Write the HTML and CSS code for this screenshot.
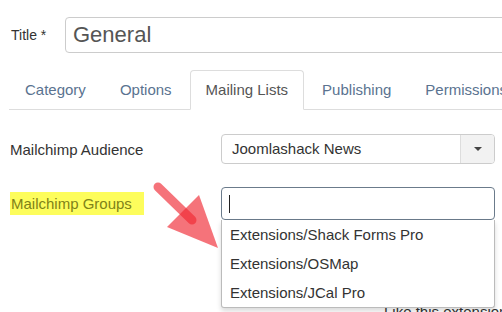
FILE: index.html
```html
<!DOCTYPE html>
<html>
<head>
  <meta charset="UTF-8">
  <meta name="viewport" content="width=device-width, initial-scale=1">
  <title>Mailing Lists</title>
  <link rel="stylesheet" href="styles.css">
</head>
<body>
  <div class="title-row">
    <label class="title-label">Title *</label>
    <div class="title-input">General</div>
  </div>

  <ul class="tabs">
    <li>Category</li>
    <li>Options</li>
    <li class="active">Mailing Lists</li>
    <li>Publishing</li>
    <li>Permissions</li>
  </ul>

  <div class="form">
    <div class="row">
      <label class="label">Mailchimp Audience</label>
      <div class="select">
        <span class="select-value">Joomlashack News</span>
        <span class="select-btn"><span class="caret"></span></span>
      </div>
    </div>

    <div class="row">
      <label class="label"><span class="highlight">Mailchimp Groups</span></label>
      <div class="control">
        <div class="search"><span class="cursor"></span></div>
        <ul class="dropdown">
          <li>Extensions/Shack Forms Pro</li>
          <li>Extensions/OSMap</li>
          <li>Extensions/JCal Pro</li>
        </ul>
      </div>
    </div>

    <p class="side-note">Like this extension?</p>
  </div>

  <!-- annotation arrow drawn over the form -->
  <svg class="pointer" width="502" height="312" viewBox="0 0 502 312">
    <line x1="158" y1="187" x2="192" y2="220" stroke="rgb(240,40,50)" stroke-opacity="0.65" stroke-width="9" stroke-linecap="round"/>
    <polygon points="167,227 199,195 218,248" fill="rgb(240,40,50)" fill-opacity="0.65"/>
  </svg>
</body>
</html>
```

FILE: styles.css
```css
body {
  margin: 0;
  padding: 0;
  width: 502px;
  height: 312px;
  overflow: hidden;
  background: #fff;
  font-family: "Liberation Sans", Arial, sans-serif;
  color: #333;
  position: relative;
}

.title-row {
  display: flex;
  align-items: center;
  padding: 17px 0 0 11px;
}

.title-label {
  width: 54px;
  flex-shrink: 0;
  font-size: 14px;
  color: #333;
}

.title-input {
  flex-shrink: 0;
  width: 520px;
  height: 34px;
  line-height: 34px;
  padding-left: 7px;
  border: 1px solid #ccc;
  border-radius: 4px;
  font-size: 22px;
  color: #555;
}

.tabs {
  display: flex;
  list-style: none;
  margin: 17px 0 0 9px;
  padding: 0;
  border-bottom: 1px solid #ddd;
  white-space: nowrap;
}

.tabs li {
  padding: 9px 15px;
  margin-right: 2px;
  margin-bottom: -1px;
  line-height: 20px;
  font-size: 15px;
  color: #5a7390;
  border: 1px solid transparent;
  border-radius: 4px 4px 0 0;
}

.tabs li.active {
  color: #555;
  border-color: #ddd #ddd transparent;
  background: #fff;
}

.form {
  padding: 24px 0 0 10px;
}

.row {
  display: flex;
  align-items: center;
  margin-bottom: 23px;
}

.label {
  width: 211px;
  flex-shrink: 0;
  font-size: 15px;
  color: #333;
}

.highlight {
  background: #fdfd5c;
  color: #7f8218;
  padding: 3px 12px 3px 1px;
}

.select {
  display: flex;
  width: 272px;
  height: 28px;
  border: 1px solid #ccc;
  border-radius: 4px;
  overflow: hidden;
}

.select-value {
  flex: 1;
  padding-left: 10px;
  line-height: 28px;
  font-size: 15px;
  color: #333;
}

.select-btn {
  width: 33px;
  display: flex;
  align-items: center;
  justify-content: center;
  background: #f2f2f2;
  border-left: 1px solid #ddd;
}

.caret {
  width: 0;
  height: 0;
  border-left: 4px solid transparent;
  border-right: 4px solid transparent;
  border-top: 4px solid #444;
}

.control {
  position: relative;
}

.search {
  width: 272px;
  height: 31px;
  border: 1px solid #6b7b8b;
  border-radius: 4px;
  display: flex;
  align-items: center;
}

.cursor {
  margin-left: 7px;
  width: 1px;
  height: 18px;
  background: #222;
}

.dropdown {
  position: absolute;
  top: 33px;
  left: 0;
  z-index: 2;
  width: 272px;
  margin: 0;
  padding: 0;
  list-style: none;
  background: #fff;
  border: 1px solid #bbb;
  border-top: none;
  border-radius: 0 0 3px 3px;
  box-shadow: 0 3px 5px rgba(0, 0, 0, 0.15);
}

.dropdown li {
  padding-left: 8px;
  height: 29px;
  line-height: 29px;
  font-size: 15px;
  color: #333;
}

.side-note {
  margin: 83px 0 0 374px;
  line-height: 17px;
  font-size: 15px;
  color: #333;
  white-space: nowrap;
}

.pointer {
  position: absolute;
  top: 0;
  left: 0;
  z-index: 3;
  pointer-events: none;
}
```
